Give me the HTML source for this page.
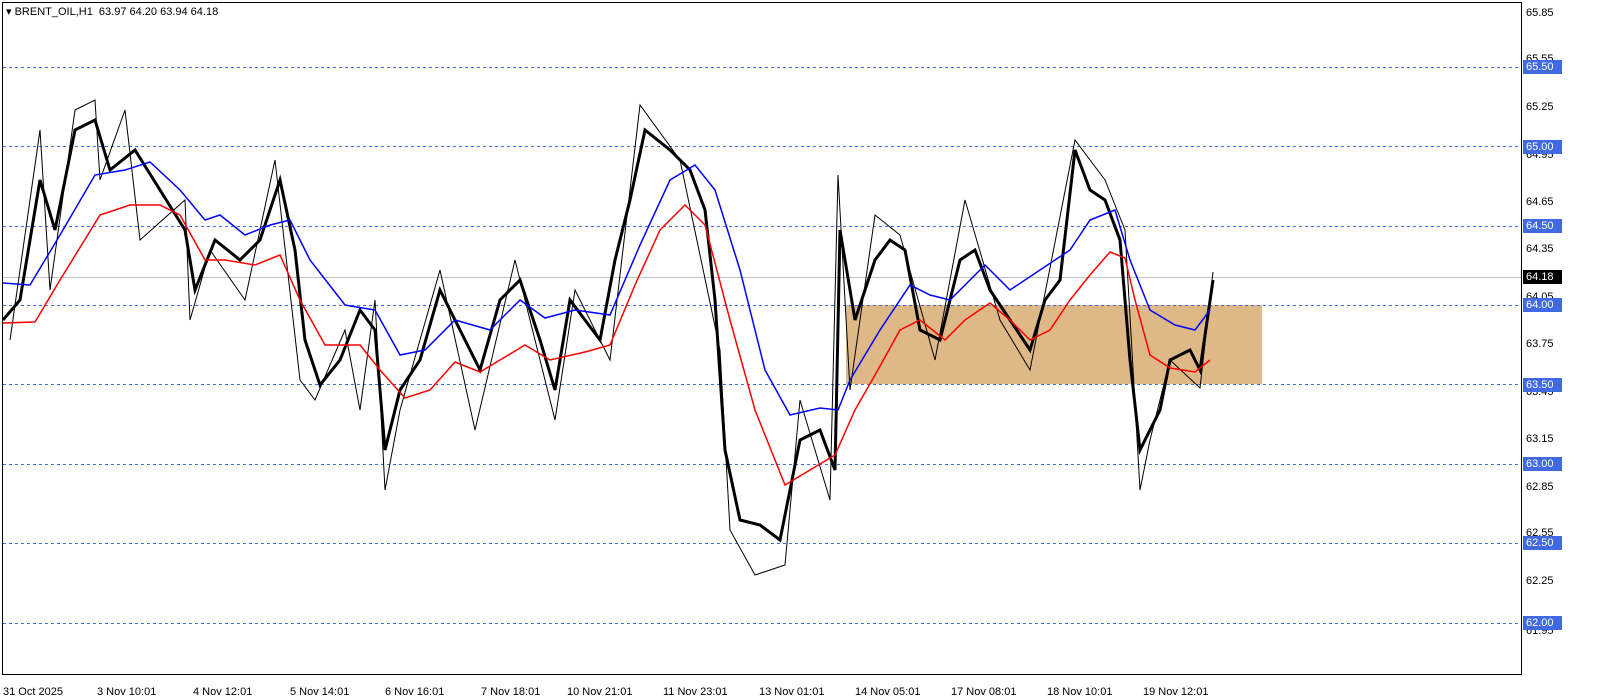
<!DOCTYPE html><html><head><style>
body{margin:0;width:1614px;height:698px;background:#fff;font-family:"Liberation Sans",sans-serif;overflow:hidden;position:relative}
.t{position:absolute;font-size:11px;color:#000}
.r{position:absolute;left:1526px;font-size:11px}
.tag{position:absolute;left:1523px;width:36px;height:14px;background:#4169e1;color:#fff;font-size:11px;line-height:14px;padding-left:3px}
</style></head><body>
<svg width="1614" height="698" style="position:absolute;left:0;top:0">
<rect x="846" y="305" width="416" height="79" fill="#dfb887"/>
<g stroke="#4169e1" stroke-dasharray="3,3" stroke-width="1">
<line x1="3" x2="1521" y1="67.5" y2="67.5"/><line x1="3" x2="1521" y1="146.5" y2="146.5"/><line x1="3" x2="1521" y1="226.5" y2="226.5"/><line x1="3" x2="1521" y1="305.5" y2="305.5"/><line x1="3" x2="1521" y1="384.5" y2="384.5"/><line x1="3" x2="1521" y1="464.5" y2="464.5"/><line x1="3" x2="1521" y1="543.5" y2="543.5"/><line x1="3" x2="1521" y1="623.5" y2="623.5"/>
</g>
<line x1="3" x2="1521" y1="277.5" y2="277.5" stroke="#c0c0c0"/>
<polyline fill="none" stroke="#000" stroke-width="3" points="3,320 20,300 40,180 55,230 75,130 95,120 110,170 135,150 160,190 185,230 195,290 215,240 240,260 260,240 280,180 295,250 305,340 320,385 340,360 360,310 375,330 385,450 400,390 420,360 440,290 460,330 480,370 500,300 520,280 540,340 555,390 570,300 600,340 615,260 630,200 645,130 670,150 690,170 705,210 715,300 725,450 740,520 760,525 780,540 800,440 820,430 835,470 840,230 855,320 875,260 890,240 905,250 920,330 940,340 960,260 975,250 990,290 1010,320 1030,350 1045,300 1060,280 1075,150 1090,190 1105,200 1120,240 1130,360 1140,450 1160,410 1170,360 1190,350 1200,370 1213,280"/>
<polyline fill="none" stroke="#000" stroke-width="1" points="10,340 20,270 40,130 50,290 75,110 95,100 100,180 125,110 140,240 185,200 190,320 210,250 245,300 275,160 300,380 315,400 345,330 360,410 375,300 385,490 400,410 440,270 475,430 515,260 555,420 575,290 610,360 640,105 680,160 720,350 730,530 755,575 785,565 800,400 830,500 838,175 850,390 875,215 900,235 935,360 965,200 1000,320 1030,370 1075,140 1105,180 1125,230 1140,490 1150,440 1170,360 1200,388 1213,272"/>
<polyline fill="none" stroke="#0000ff" stroke-width="1.5" points="3,283 30,285 60,235 95,175 125,170 150,162 180,190 205,220 220,215 245,235 270,225 290,220 310,260 345,305 375,310 400,355 425,350 455,320 490,330 520,300 545,318 575,310 610,315 640,245 670,180 695,165 715,190 740,270 765,370 790,415 820,408 838,410 850,380 880,330 910,285 930,295 950,300 985,265 1010,290 1040,270 1070,250 1090,220 1115,210 1130,260 1150,310 1175,325 1195,330 1210,310"/>
<polyline fill="none" stroke="#ff0000" stroke-width="1.5" points="3,323 35,322 60,280 100,215 130,205 160,205 180,215 205,260 225,260 255,265 280,255 300,300 325,345 360,345 380,370 405,398 430,390 455,362 480,372 500,360 525,345 550,360 585,352 610,345 635,285 660,230 685,205 705,225 730,320 755,410 785,485 810,470 835,455 855,410 875,375 900,330 920,320 945,340 965,320 990,303 1010,320 1030,340 1050,330 1070,300 1090,275 1110,252 1125,258 1135,300 1150,355 1170,368 1195,372 1210,360"/>
<rect x="2.5" y="2.5" width="1519" height="672" fill="none" stroke="#000"/>
</svg>
<div class="t" style="left:6px;top:5px">▾ BRENT_OIL,H1&nbsp; 63.97 64.20 63.94 64.18</div>
<div class="r" style="top:7px">65.85</div><div class="r" style="top:53px">65.55</div><div class="r" style="top:101px">65.25</div><div class="r" style="top:149px">64.95</div><div class="r" style="top:196px">64.65</div><div class="r" style="top:243px">64.35</div><div class="r" style="top:291px">64.05</div><div class="r" style="top:338px">63.75</div><div class="r" style="top:386px">63.45</div><div class="r" style="top:433px">63.15</div><div class="r" style="top:481px">62.85</div><div class="r" style="top:527px">62.55</div><div class="r" style="top:575px">62.25</div><div class="r" style="top:625px">61.95</div>
<div class="tag" style="top:60px">65.50</div><div class="tag" style="top:140px">65.00</div><div class="tag" style="top:219px">64.50</div><div class="tag" style="top:298px">64.00</div><div class="tag" style="top:378px">63.50</div><div class="tag" style="top:457px">63.00</div><div class="tag" style="top:536px">62.50</div><div class="tag" style="top:616px">62.00</div>
<div class="tag" style="top:270px;background:#000">64.18</div>
<div class="t" style="left:3px;top:686px">31 Oct 2025</div><div class="t" style="left:97px;top:686px">3 Nov 10:01</div><div class="t" style="left:193px;top:686px">4 Nov 12:01</div><div class="t" style="left:290px;top:686px">5 Nov 14:01</div><div class="t" style="left:385px;top:686px">6 Nov 16:01</div><div class="t" style="left:481px;top:686px">7 Nov 18:01</div><div class="t" style="left:567px;top:686px">10 Nov 21:01</div><div class="t" style="left:663px;top:686px">11 Nov 23:01</div><div class="t" style="left:759px;top:686px">13 Nov 01:01</div><div class="t" style="left:855px;top:686px">14 Nov 05:01</div><div class="t" style="left:951px;top:686px">17 Nov 08:01</div><div class="t" style="left:1047px;top:686px">18 Nov 10:01</div><div class="t" style="left:1143px;top:686px">19 Nov 12:01</div>
</body></html>
